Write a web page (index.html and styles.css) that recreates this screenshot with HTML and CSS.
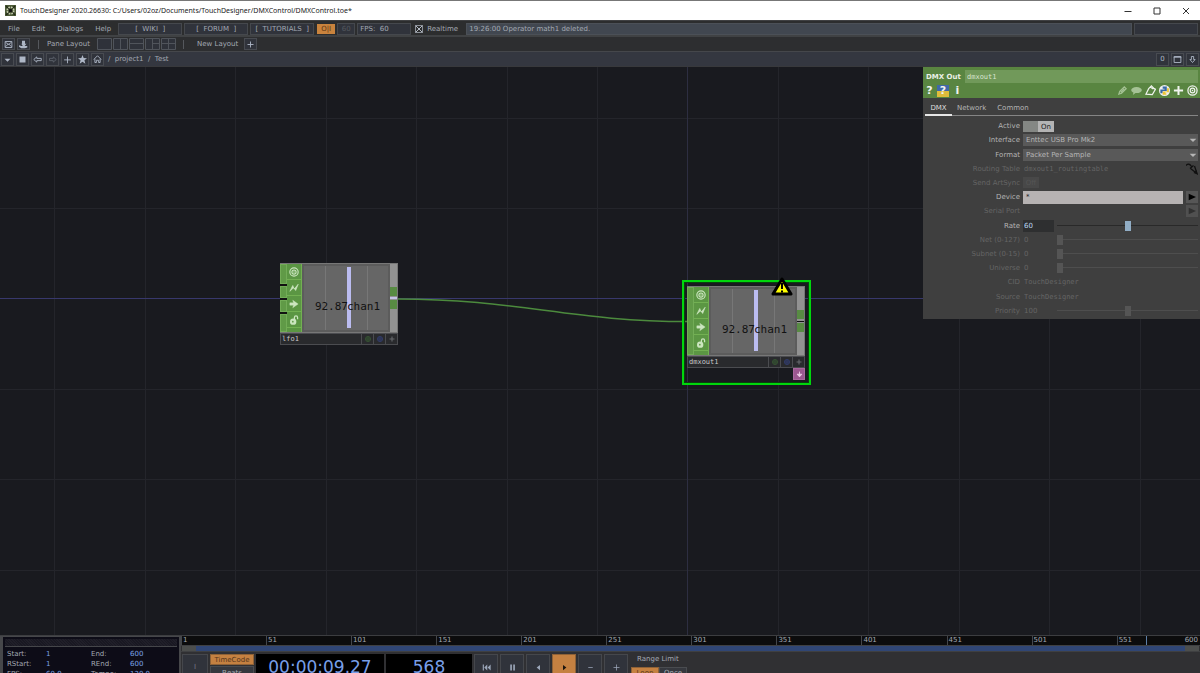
FILE: index.html
```html
<!DOCTYPE html>
<html lang="en">
<head>
<meta charset="utf-8">
<title>TouchDesigner</title>
<link rel="stylesheet" href="styles.css">
</head>
<body>
<svg class="defs" aria-hidden="true">
  <symbol id="target" viewBox="0 0 12 12"><g fill="none" stroke="currentColor"><circle cx="6" cy="6" r="5" stroke-width="1.400"/><circle cx="6" cy="6" r="2.500" stroke-width="1.300"/></g><circle cx="6" cy="6" r=".8" fill="currentColor"/></symbol>
  <symbol id="bolt" viewBox="0 0 12 12"><path d="M1 10 4.500 3l1.800 4.200L11 1.500 8 9 5.600 5.600Z" fill="currentColor" stroke="currentColor" stroke-width=".8"/></symbol>
  <symbol id="arrow" viewBox="0 0 12 12"><path d="M1 4.600H5.500L4.500 1.500 11 6 4.500 10.500 5.500 7.400H1Z" fill="currentColor" stroke="currentColor" stroke-width=".5"/></symbol>
  <symbol id="lock" viewBox="0 0 12 12"><circle cx="5" cy="8" r="3.800" fill="currentColor"/><path d="M6.500 5V3a1.900 1.900 0 0 1 3.800 0V5" fill="none" stroke="currentColor" stroke-width="1.500"/><circle cx="4.600" cy="8" r="1" fill="#5f9a46"/></symbol>
  <symbol id="plus" viewBox="0 0 12 12"><path d="M6 1v10M1 6h10" stroke="currentColor" stroke-width="2.200"/></symbol>
  <symbol id="caret" viewBox="0 0 12 12"><path d="M1 4h10L6 9Z" fill="currentColor"/></symbol>
  <symbol id="play" viewBox="0 0 12 12"><path d="M1 1 12 6 1 11Z" fill="currentColor"/></symbol>
</svg>

<header class="titlebar">
  <svg class="app-icon" viewBox="0 0 11 11"><path d="M0 0h11v11H0z" fill="#4b5936"/><path d="m1 1 9 9M10 1 1 10" stroke="#222b16" stroke-width="1.500"/><circle cx="5.500" cy="5.500" r="3.300" fill="none" stroke="#c8ceb0" stroke-width="1.600" stroke-dasharray="1.600 1"/><circle cx="5.500" cy="5.500" r="1.500" fill="#111"/></svg>
  <span class="title">TouchDesigner 2020.26630: C:/Users/02oz/Documents/TouchDesigner/DMXControl/DMXControl.toe*</span>
  <button class="win" aria-label="Minimize"><svg viewBox="0 0 8 8"><path d="M.5 4.500h7"/></svg></button>
  <button class="win" aria-label="Maximize"><svg viewBox="0 0 8 8"><path d="M1 1h6v6H1z"/></svg></button>
  <button class="win" aria-label="Close"><svg viewBox="0 0 8 8"><path d="m1 1 6 6M7 1 1 7"/></svg></button>
</header>

<nav class="menubar">
  <button class="menu">File</button><button class="menu">Edit</button><button class="menu">Dialogs</button><button class="menu">Help</button>
  <a class="cell link" href="#wiki">[&nbsp; WIKI &nbsp;]</a>
  <a class="cell link" href="#forum">[&nbsp; FORUM &nbsp;]</a>
  <a class="cell link" href="#tutorials">[&nbsp; TUTORIALS &nbsp;]</a>
  <button class="oi">O|I</button>
  <span class="cell target-rate">60</span>
  <span class="cell fps">FPS:&nbsp; 60</span>
  <label class="realtime"><input type="checkbox" checked>Realtime</label>
  <span class="status">19:26:00 Operator math1 deleted.</span>
  <span class="cell memory"></span>
</nav>

<div class="toolbar">
  <button class="box" aria-label="Palette"><svg viewBox="0 0 12 12" class="line"><path d="M1.500 2h9v8h-9zM2 9l4-4 4 4M2 3l4 3 4-3"/></svg></button>
  <button class="box" aria-label="Browser"><svg viewBox="0 0 12 12" class="solid"><path d="M4 1h4v4h2L7.500 8H11v2L8 11H3L0 9V7l3 1h2L3 5h1Z"/></svg></button>
  <span class="divider"></span>
  <span class="caption">Pane Layout</span>
  <button class="pane" aria-label="Single"><svg viewBox="0 0 15 12"><path d="M.5.5h14v11H.5z"/></svg></button>
  <button class="pane" aria-label="Side by side"><svg viewBox="0 0 15 12"><path d="M.5.5h14v11H.5zM7.500 0v12"/></svg></button>
  <button class="pane" aria-label="Stacked"><svg viewBox="0 0 15 12"><path d="M.5.5h14v11H.5zM0 5.500h15"/></svg></button>
  <button class="pane" aria-label="Three panes"><svg viewBox="0 0 15 12"><path d="M.5.5h14v11H.5zM7.500 0v12M7 5.500h8"/></svg></button>
  <button class="pane" aria-label="Four panes"><svg viewBox="0 0 15 12"><path d="M.5.5h14v11H.5zM7.500 0v12M0 5.500h15"/></svg></button>
  <span class="divider"></span>
  <span class="caption new">New Layout</span>
  <button class="box" aria-label="Add layout"><svg viewBox="0 0 12 12" class="line"><path d="M6 2v8M2 6h8"/></svg></button>
</div>

<div class="pathbar">
  <button class="box" aria-label="Pane type"><svg viewBox="0 0 12 12" class="solid"><path d="M2 5h8L6 9Z"/></svg></button>
  <button class="box" aria-label="Stop"><svg viewBox="0 0 12 12" class="solid"><path d="M2 2h8v8H2z"/></svg></button>
  <button class="box" aria-label="Back"><svg viewBox="0 0 12 12" class="line"><path d="M1 6 5 2.500v2h6v3H5v2Z"/></svg></button>
  <button class="box dim" aria-label="Forward"><svg viewBox="0 0 12 12" class="line"><path d="M11 6 7 2.500v2H2v3h5v2Z"/></svg></button>
  <button class="box" aria-label="Add"><svg viewBox="0 0 12 12" class="line"><path d="M6 2v9M1.500 6.500h9"/></svg></button>
  <button class="box" aria-label="Bookmark"><svg viewBox="0 0 12 12" class="solid"><path d="m6 0 1.600 4 4.400.3-3.400 2.700 1.200 4.500L6 9l-3.800 2.500 1.200-4.500L0 4.300l4.400-.3Z"/></svg></button>
  <button class="box" aria-label="Home"><svg viewBox="0 0 12 12" class="line"><path d="M1 6 6 1l5 5M2.500 5v5h2V7h3v3h2V5"/></svg></button>
  <span class="path">/&nbsp; project1 &nbsp;/&nbsp; Test</span>
  <button class="box" aria-label="Network overview">0</button>
  <button class="box" aria-label="Maximize pane"><svg viewBox="0 0 12 12" class="line"><path d="M1.500 2h9v8h-9zM1 3h10"/></svg></button>
  <button class="box" aria-label="Pin"><svg viewBox="0 0 12 12" class="line"><path d="M4.500 2h3v4h2L6 10 2.500 6h2Z"/></svg></button>
</div>

<main class="network">
  <svg class="grid" aria-hidden="true">
    <path class="minor" d="M54.500 0v700M145.500 0v700M235.500 0v700M326.500 0v700M416.500 0v700M507.500 0v700M597.500 0v700M778.500 0v700M868.500 0v700M959.500 0v700M1049.500 0v700M1140.500 0v700M0 51.500h3000M0 141.500h3000M0 322.500h3000M0 412.500h3000M0 503.500h3000"/>
    <path class="axis-y" d="M687.500 0v700"/>
    <path class="axis-x" d="M0 231.500h3000"/>
    <path class="wire" d="M397 232C520 232 570 255 692 254.500"/>
  </svg>

  <section class="node lfo">
    <div class="body">
      <div class="ports"><i></i><i></i><i></i><i></i></div>
      <div class="flags"><button aria-label="Viewer"><svg><use href="#target"/></svg></button><button aria-label="Bypass"><svg><use href="#bolt"/></svg></button><button aria-label="Export"><svg><use href="#arrow"/></svg></button><button aria-label="Lock"><svg><use href="#lock"/></svg></button><span></span></div>
      <div class="viewer"><i class="tick one"></i><i class="tick two"></i><i class="bar"></i><span class="value">92.87</span><span class="chan">chan1</span></div>
      <div class="out linked"><i></i><i></i></div>
    </div>
    <div class="foot"><span class="name">lfo1</span><button class="g" aria-label="Cook"><svg><use href="#target"/></svg></button><button class="b" aria-label="Clone"><svg><use href="#target"/></svg></button><button aria-label="Activate"><svg><use href="#plus"/></svg></button></div>
  </section>

  <section class="node dmx">
    <div class="body">
      <div class="ports joined"></div>
      <div class="flags"><button aria-label="Viewer"><svg><use href="#target"/></svg></button><button aria-label="Bypass"><svg><use href="#bolt"/></svg></button><button aria-label="Export"><svg><use href="#arrow"/></svg></button><button aria-label="Lock"><svg><use href="#lock"/></svg></button><span></span></div>
      <div class="viewer"><i class="tick one"></i><i class="tick two"></i><i class="bar"></i><span class="value">92.87</span><span class="chan">chan1</span></div>
      <div class="out dark"><i></i><i></i></div>
    </div>
    <div class="foot"><span class="name">dmxout1</span><button class="g" aria-label="Cook"><svg><use href="#target"/></svg></button><button class="b" aria-label="Clone"><svg><use href="#target"/></svg></button><button aria-label="Activate"><svg><use href="#plus"/></svg></button></div>
    <button class="dock" aria-label="Docked operators"><svg viewBox="0 0 12 12"><path d="M6 1v8M2 5.500 6 10l4-4.500Z" fill="currentColor" stroke="currentColor" stroke-width="1.500"/></svg></button>
    <svg class="warning" viewBox="0 0 22 19"><path d="M11 2 20 17H2Z" fill="#ff0" stroke="#000" stroke-width="3" stroke-linejoin="round"/><path d="M11 6v6M11 13.500v2" stroke="#000" stroke-width="2"/></svg>
  </section>

  <aside class="params">
    <div class="head">
      <div class="op"><label for="opname">DMX Out</label><input id="opname" value="dmxout1"></div>
      <div class="tools">
        <button class="glyph">?</button>
        <button class="glyph pyhelp">?</button>
        <button class="glyph">i</button>
        <span class="space"></span>
        <button class="soft" aria-label="Edit"><svg viewBox="0 0 12 12"><path d="m2 10 1-3 5-5 2 2-5 5ZM4 8l4-4" fill="none" stroke="currentColor" stroke-width="1.300"/></svg></button>
        <button class="soft" aria-label="Comment"><svg viewBox="0 0 12 12"><ellipse cx="6" cy="5.500" rx="5.800" ry="3.300" fill="currentColor"/><path d="m3 7-1 4 4-3Z" fill="currentColor"/></svg></button>
        <button aria-label="Copy"><svg viewBox="0 0 12 12"><path d="M1 10 4 4l3-3 3 3 1.500.5L8 10.500ZM6 2.500l3 2" fill="none" stroke="currentColor" stroke-width="1.300"/></svg></button>
        <button aria-label="Language"><svg viewBox="0 0 12 12"><circle cx="6" cy="6" r="6" fill="#eee"/><path d="M4 1.500h4.500v5H4v2.500H1.500V5H6V4H4Z" fill="#376aa5"/><path d="M8 10.500H4V7.200h4.800V3.500h2V8H7v1h1Z" fill="#ecc533"/></svg></button>
        <button aria-label="Add parameter"><svg><use href="#plus"/></svg></button>
        <button aria-label="View mode"><svg><use href="#target"/></svg></button>
      </div>
    </div>
    <div class="tabs"><button class="on">DMX</button><button>Network</button><button>Common</button></div>
    <form class="rows">
      <div class="row"><label for="active">Active</label><label class="toggle"><input id="active" type="checkbox" checked><span>On</span></label></div>
      <div class="row"><label for="iface">Interface</label><span class="drop"><select id="iface"><option>Enttec USB Pro Mk2</option></select><svg><use href="#caret"/></svg></span></div>
      <div class="row"><label for="format">Format</label><span class="drop"><select id="format"><option>Packet Per Sample</option></select><svg><use href="#caret"/></svg></span></div>
      <div class="row off"><label for="routing">Routing Table</label><input class="text mono" id="routing" value="dmxout1_routingtable" disabled><svg class="pick" viewBox="0 0 12 12"><path d="M0 2.500Q3-.5 5.500 3.500M4 5.500 7.500 2.500M4.500 5.500 11 10.500 8.500 3" fill="none" stroke="#111" stroke-width="1.300"/><path d="M11.500 11.500 7.500 10l3-3Z" fill="#111"/></svg></div>
      <div class="row off"><label for="art">Send ArtSync</label><button id="art" type="button" class="offbtn" disabled>Off</button></div>
      <div class="row"><label for="device">Device</label><input class="text device" id="device" value="*"><button type="button" class="step" aria-label="Choose device"><svg><use href="#play"/></svg></button></div>
      <div class="row off"><label for="serial">Serial Port</label><input class="text" id="serial" disabled><button type="button" class="step" aria-label="Choose port" disabled><svg><use href="#play"/></svg></button></div>
      <div class="row"><label for="rate">Rate</label><input class="text num rate" id="rate" value="60"><input type="range" aria-label="Rate" min="0" max="120" value="60"></div>
      <div class="row off"><label for="net">Net (0-127)</label><input class="text num" id="net" value="0" disabled><input type="range" aria-label="Net" value="0" disabled></div>
      <div class="row off"><label for="subnet">Subnet (0-15)</label><input class="text num" id="subnet" value="0" disabled><input type="range" aria-label="Subnet" value="0" disabled></div>
      <div class="row off"><label for="universe">Universe</label><input class="text num" id="universe" value="0" disabled><input type="range" aria-label="Universe" value="0" disabled></div>
      <div class="row off"><label for="cid">CID</label><input class="text mono" id="cid" value="TouchDesigner" disabled></div>
      <div class="row off"><label for="source">Source</label><input class="text mono" id="source" value="TouchDesigner" disabled></div>
      <div class="row off"><label for="priority">Priority</label><input class="text num" id="priority" value="100" disabled><input type="range" aria-label="Priority" min="0" max="200" value="100" disabled></div>
    </form>
  </aside>
</main>

<footer class="timeline">
  <div class="info">
    <div class="grip"></div>
    <dl>
      <dt>Start:</dt><dd>1</dd><dt>End:</dt><dd>600</dd>
      <dt>RStart:</dt><dd>1</dd><dt>REnd:</dt><dd>600</dd>
      <dt>FPS:</dt><dd>60.0</dd><dt>Tempo:</dt><dd>120.0</dd>
    </dl>
  </div>
  <div class="transport">
    <div class="ruler"><span>1</span><span>51</span><span>101</span><span>151</span><span>201</span><span>251</span><span>301</span><span>351</span><span>401</span><span>451</span><span>501</span><span class="last">551<b>600</b></span><i class="playhead"></i></div>
    <div class="range"><i></i><b></b><i></i></div>
    <div class="controls">
      <button class="key first">I</button>
      <div class="modes"><button class="hot">TimeCode</button><button>Beats</button></div>
      <output class="lcd code">00:00:09.27</output>
      <output class="lcd frame">568</output>
      <button class="key" aria-label="Rewind"><svg viewBox="0 0 12 12"><path d="M1 2h1.500v8H1zM7 2v8L3 6ZM11.500 2v8l-4-4Z" fill="currentColor"/></svg></button>
      <button class="key" aria-label="Pause"><svg viewBox="0 0 12 12"><path d="M3 2h2.200v8H3zM7 2h2.200v8H7z" fill="currentColor"/></svg></button>
      <button class="key" aria-label="Play reverse"><svg viewBox="0 0 12 12"><path d="M8 2.500v7L3.500 6Z" fill="currentColor"/></svg></button>
      <button class="key hot" aria-label="Play"><svg viewBox="0 0 12 12"><path d="M4 2.500v7L8.500 6Z" fill="currentColor"/></svg></button>
      <button class="key" aria-label="Step back"><svg viewBox="0 0 12 12"><path d="M3 6h6" stroke="currentColor"/></svg></button>
      <button class="key" aria-label="Step forward"><svg viewBox="0 0 12 12"><path d="M2 6h8M6 2v8" stroke="currentColor"/></svg></button>
      <div class="limit"><span>Range Limit</span><div><button class="hot">Loop</button><button>Once</button></div></div>
    </div>
  </div>
</footer>
</body>
</html>
```
FILE: styles.css
```css
* { box-sizing: border-box; }
html, body { height: 100%; }
body {
  margin: 0;
  display: flex;
  flex-direction: column;
  overflow: hidden;
  background: #1a1b20;
  color: #a3a9b3;
  font: 7px/10px "DejaVu Sans", sans-serif;
}
button, input, select {
  font: inherit;
  color: inherit;
  background: none;
  border: 0;
  padding: 0;
  margin: 0;
  border-radius: 0;
  min-width: 0;
}
button { display: flex; align-items: center; justify-content: center; }
svg { display: block; flex: none; }
.defs { position: absolute; width: 0; height: 0; }

.titlebar {
  flex: none;
  height: 20px;
  display: flex;
  align-items: center;
  padding: 0 0 0 5px;
  background: #fff;
  border-top: 1px solid #777;
  color: #222;
  font-family: "Noto Sans", sans-serif;
}
.app-icon { width: 11px; height: 11px; }
.title { flex: 1; padding-left: 4px; white-space: nowrap; }
.win { width: 29px; height: 16px; }
.win svg { width: 8px; height: 8px; fill: none; stroke: #333; }

.menubar {
  flex: none;
  height: 17px;
  display: flex;
  align-items: center;
  gap: 2px;
  padding: 1px 2px 0 3px;
  background: #2c2d2e;
  border-top: 1px solid #3f4042;
  border-bottom: 2px solid #404244;
}
.menu { padding: 0 5px; height: 13px; white-space: nowrap; }
.cell { height: 12px; background: #30333b; border: 1px solid #45484d; line-height: 11px; white-space: nowrap; }
.link { width: 64px; color: inherit; text-decoration: none; text-align: center; }
.oi { width: 18px; height: 10px; background: #c9833d; color: #5b3514; margin-left: 1px; }
.target-rate { width: 18px; text-align: center; color: #54585f; }
.fps { width: 54px; padding-left: 2px; }
.realtime { display: flex; align-items: center; gap: 4px; width: 51px; padding-left: 2px; }
.realtime input {
  appearance: none;
  width: 8px;
  height: 8px;
  border: 1px solid #8c9199;
  background: linear-gradient(45deg, transparent 42%, #b4bac4 42% 58%, transparent 58%), linear-gradient(-45deg, transparent 42%, #b4bac4 42% 58%, transparent 58%);
}
.status { flex: 1; height: 12px; padding-left: 2px; background: #414750; border: 1px solid #4b5057; line-height: 11px; }
.memory { width: 64px; }

.toolbar, .pathbar { flex: none; display: flex; align-items: center; padding: 0 2px; gap: 2px; }
.toolbar { height: 14px; background: #2d2e30; }
.pathbar { height: 16px; background: #343740; border-top: 1px solid #45474b; border-bottom: 1px solid #38393c; padding: 0 1px; }
.box { width: 13px; height: 13px; background: #30333b; border: 1px solid #484b51; color: #aeb7c6; }
.toolbar .box { height: 12px; }
.box svg { width: 9px; height: 9px; }
.line { fill: none; stroke: currentColor; stroke-width: 1.2; }
.solid { fill: currentColor; }
.dim { color: #5d626c; }
.divider { width: 1px; height: 9px; background: #55585d; margin: 0 5px 0 6px; }
.caption { width: 49px; padding-left: 1px; white-space: nowrap; }
.new { width: 46px; margin-left: 5px; }
.pane { width: 14px; height: 12px; }
.pane svg { width: 15px; height: 12px; fill: #2f323a; stroke: #50545b; }
.path { flex: 1; padding-left: 2px; }

.network { position: relative; flex: 1; min-height: 0; overflow: hidden; background: #191a1f; }
.grid { position: absolute; inset: 0; width: 100%; height: 100%; fill: none; }
.minor { stroke: #24252b; }
.axis-y { stroke: #2d2e41; }
.axis-x { stroke: #38386c; }
.wire { stroke: #4c8a3d; stroke-width: 1.5; }

.node { position: absolute; width: 118px; }
.lfo { left: 280px; top: 196px; }
.dmx { left: 682px; top: 213px; width: 129px; height: 105px; border: 2px solid #00d60c; outline: 1px solid #0b400f; outline-offset: -3px; padding: 4px 4px 4px 3px; }
.body { height: 70px; display: flex; border: 1px solid #777; background: #575757; }
.ports { width: 7px; display: grid; grid-template-rows: 20px 12px 12px 1fr; gap: 2px; background: #111; margin-left: -1px; }
.ports i { background: #609a47; border: 1px solid #72ac57; }
.joined { background: #609a47; border: 1px solid #72ac57; }
.flags { width: 15px; display: grid; grid-template-rows: repeat(4, 15px) 1fr; gap: 1px; background: #72b052; padding-right: 1px; }
.flags > * { background: #5b9643; color: #cbe5bf; }
.flags svg { width: 10px; height: 10px; }
.viewer { position: relative; flex: 1; background: #666; border: 2px solid #5c5c5c; font: 11px/14px "DejaVu Sans Mono", monospace; color: #121212; }
.tick { position: absolute; top: 0; bottom: 0; width: 1px; background: #777; }
.one { left: 21px; }
.two { left: 63px; }
.bar { position: absolute; left: 43px; top: 1px; bottom: 2px; width: 4px; background: #bbbcf0; }
.value, .chan { position: absolute; top: 34px; }
.value { right: 40px; }
.chan { left: 43px; }
.out { width: 7px; background: #929292; display: flex; flex-direction: column; justify-content: center; gap: 4px; }
.out i { height: 9px; background: #588b43; }
.linked { background: linear-gradient(#929292 33px, #c3c3e6 33px 35px, #929292 35px); }
.dark { background: linear-gradient(#929292 34px, #111 34px 35px, #929292 35px); }
.foot { height: 12px; display: flex; background: #292a2d; border: 1px solid #4b4c50; color: #686a6e; }
.foot button { width: 12px; border-left: 1px solid #4b4c50; }
.foot svg { width: 6px; height: 6px; }
.foot .g { color: #3c6836; }
.foot .b { color: #36458c; }
.name { flex: 1; padding-left: 1px; color: #c8c8c8; font-family: "DejaVu Sans Mono", monospace; }
.dock { width: 12px; height: 12px; margin-left: auto; background: #9c5790; border: 1px solid #aa679e; color: #efcce7; }
.dock svg { width: 7px; height: 7px; }
.warning { position: absolute; right: 16px; top: -5px; width: 22px; height: 19px; }

.params { position: absolute; right: 0; top: 0; width: 277px; background: #3f3f3f; color: #b4b4b4; padding-bottom: 1px; }
.head { height: 31px; padding: 3px 2px 0 3px; background: #598541; }
.op { display: flex; height: 13px; align-items: center; }
.op label { width: 39px; font-weight: bold; color: #e9f0e5; white-space: nowrap; }
.op input { flex: 1; height: 13px; padding-left: 2px; background: #71995a; color: #d7e3cf; font-family: "DejaVu Sans Mono", monospace; }
.tools { height: 15px; display: flex; align-items: center; gap: 3px; color: #f0f3ee; }
.tools svg { width: 11px; height: 11px; }
.space { flex: 1; }
.glyph { width: 7px; height: 12px; font-size: 11px; font-weight: bold; }
.pyhelp { width: 12px; background: linear-gradient(#4068a8 50%, #dfbc3b 50%); margin: 0 2px 0 1px; }
.soft { color: #a5c295; }
.tabs { height: 18px; margin: 0 2px; display: flex; border-bottom: 1px solid #858585; }
.tabs button { height: 18px; padding: 3px 5px 0; margin-right: 1px; border-bottom: 2px solid transparent; }
.tabs .on { color: #ddd; border-color: #e6e6e6; width: 27px; margin-right: 0; }
.rows { margin: 3px 2px 0 0; height: 199px; display: grid; grid-template-rows: repeat(14, 1fr); }
.row { display: grid; grid-template-columns: 96px minmax(0, 1fr) 12px; column-gap: 3px; align-items: center; padding-left: 1px; }
.row > label:first-child { text-align: right; white-space: nowrap; }
.row:has([type=range]) { grid-template-columns: 96px 31px minmax(0, 1fr); }
.off { color: #656565; }
.toggle { width: 31px; height: 11px; display: flex; background: #b4b4b4; color: #222; }
.toggle input { appearance: none; width: 15px; height: 11px; background: #848784; }
.toggle span { flex: 1; text-align: center; line-height: 12px; }
.drop { position: relative; grid-column: 2 / -1; display: block; height: 12px; background: #595959; color: #b6b6b6; }
.drop select { display: block; appearance: none; width: 100%; height: 12px; padding-left: 3px; }
.drop svg { position: absolute; right: 1px; top: 2px; width: 8px; height: 8px; pointer-events: none; }
.text { width: 100%; height: 12px; padding-left: 1px; }
.mono { font-family: "DejaVu Sans Mono", monospace; }
.pick { width: 12px; height: 12px; }
.offbtn { width: 16px; height: 11px; background: #484848; color: #555; }
.device { height: 13px; background: #b7b3b3; color: #222; padding-left: 3px; }
.step { width: 12px; height: 12px; background: #565656; color: #000; }
.step:disabled { background: #505050; color: #303030; }
.step svg { width: 8px; height: 8px; }
.rate { background: #2e2f30; color: #b9d9f4; }
[type=range] { appearance: none; width: 100%; height: 12px; background: linear-gradient(transparent 5px, #292929 5px 6px, transparent 6px); }
[type=range]::-webkit-slider-thumb { appearance: none; width: 6px; height: 10px; background: #91adc5; }
[type=range]:disabled { background: linear-gradient(transparent 5px, #4e4e4e 5px 6px, transparent 6px); }
[type=range]:disabled::-webkit-slider-thumb { background: #555; }

.timeline { flex: none; height: 38px; display: flex; overflow: hidden; background: #303033; border-top: 1px solid #3c3d40; }
.info { flex: none; width: 181px; height: 60px; padding: 2px; background: #0d0c17; border: 1px solid #46474a; border-width: 1px 2px 1px 3px; }
.grip { height: 8px; border-bottom: 1px solid #45464a; background: repeating-linear-gradient(45deg, #191822 0 1px, #201f29 1px 2px); }
.info dl { margin: 2px 0 0 2px; display: grid; grid-template-columns: 39px 45px 39px 1fr; grid-auto-rows: 10px; }
.info dd { margin: 0; color: #7aa2e8; }
.transport { flex: 1; min-width: 0; }
.ruler { position: relative; height: 9px; display: grid; grid-template-columns: repeat(11, 50fr) 49fr; background: #0c0c0d; line-height: 8px; }
.ruler span { border-left: 1px solid #44464a; padding-left: 1px; }
.ruler .last { display: flex; justify-content: space-between; padding-right: 2px; }
.ruler b { font-weight: normal; }
.playhead { position: absolute; left: 94.7%; top: 0; width: 1px; height: 9px; background: #5d7fa8; }
.range { height: 7px; display: flex; border: 1px solid #3f4042; border-width: 1px 0; padding: 0 1px; }
.range i { width: 14px; background: #4c4e4d; }
.range b { flex: 1; background: #304675; }
.controls { height: 40px; padding: 2px 1px 0; display: flex; gap: 2px; }
.key { width: 24px; height: 26px; background: #30333b; border: 1px solid #45474c; color: #9ca7ba; flex: none; }
.key svg { width: 9px; height: 9px; }
.first { width: 26px; color: #747b88; }
.modes { width: 44px; display: grid; grid-template-rows: 11px 13px; gap: 1px; }
.modes button, .limit button { background: #36383e; border: 1px solid #4a4c50; }
.controls .hot { background: #c58141; color: #56351b; border-color: #8f6237; }
.controls .key.hot { color: #1d150e; }
.lcd { height: 26px; background: #000; color: #789fe8; font-size: 17px; line-height: 26px; text-align: center; white-space: nowrap; flex: none; }
.code { width: 128px; }
.frame { width: 86px; }
.limit { padding-left: 1px; }
.limit span { display: block; padding-left: 6px; height: 13px; }
.limit div { display: flex; }
.limit button { width: 28px; height: 12px; }
```
